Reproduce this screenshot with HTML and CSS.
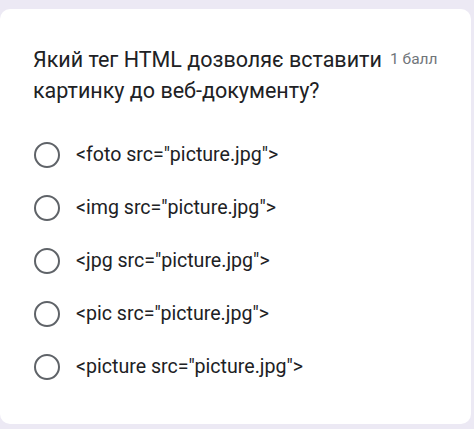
FILE: index.html
```html
<!DOCTYPE html>
<html lang="uk">
<head>
<meta charset="utf-8">
<link rel="stylesheet" href="styles.css">
</head>
<body>
<div class="card">
  <div class="question">
    <span class="qtext">Який тег HTML дозволяє вставити картинку до веб-документу?</span>
    <span class="points">1 балл</span>
  </div>
  <div class="options">
    <div class="option"><span class="radio"></span><span class="label">&lt;foto src="picture.jpg"&gt;</span></div>
    <div class="option"><span class="radio"></span><span class="label">&lt;img src="picture.jpg"&gt;</span></div>
    <div class="option"><span class="radio"></span><span class="label">&lt;jpg src="picture.jpg"&gt;</span></div>
    <div class="option"><span class="radio"></span><span class="label">&lt;pic src="picture.jpg"&gt;</span></div>
    <div class="option"><span class="radio"></span><span class="label">&lt;picture src="picture.jpg"&gt;</span></div>
  </div>
</div>
</body>
</html>
```

FILE: styles.css
```css
html, body {
  margin: 0;
  padding: 0;
}
body {
  background: #ece9f4;
  padding: 9px 3px 5px 0;
  font-family: Roboto, "Noto Sans", sans-serif;
  color: #202124;
}
.card {
  background: #ffffff;
  border-radius: 10px;
  height: 415px;
  box-sizing: border-box;
  padding: 35px 20px 0 33px;
}
.question {
  display: flex;
  align-items: flex-start;
}
.qtext {
  width: 352px;
  font-size: 21.5px;
  line-height: 31px;
}
.points {
  margin-left: 5px;
  font-size: 15.5px;
  line-height: 31px;
  color: #70757a;
  white-space: nowrap;
}
.options {
  margin-top: 22px;
  display: flex;
  flex-direction: column;
}
.option {
  height: 53px;
  display: flex;
  align-items: center;
}
.radio {
  width: 26px;
  height: 26px;
  box-sizing: border-box;
  border: 2.5px solid #5f6368;
  border-radius: 50%;
  margin-left: 1px;
  margin-right: 16px;
  flex-shrink: 0;
}
.label {
  font-size: 19.6px;
}
```
